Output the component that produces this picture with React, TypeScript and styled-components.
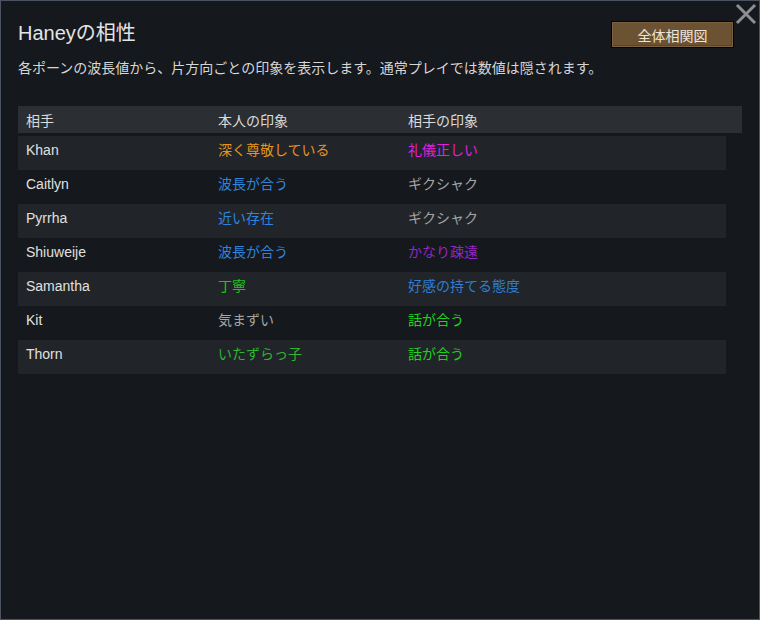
import React from "react";
import styled, { createGlobalStyle } from "styled-components";

const GlobalStyle = createGlobalStyle`
  html, body {
    margin: 0;
    padding: 0;
    background: #15181d;
  }
  body {
    font-family: "Liberation Sans", "Noto Sans CJK JP", sans-serif;
  }
`;

const Window = styled.div`
  position: relative;
  box-sizing: border-box;
  width: 760px;
  height: 620px;
  background: #15181d;
  border: 1px solid #4b5361;
  padding: 17px 17px 0 17px;
  color: #e2e2e2;
`;

const Header = styled.div`
  display: flex;
  justify-content: space-between;
  align-items: flex-start;
`;

const Title = styled.h1`
  margin: 2px 0 0 0;
  font-size: 20px;
  font-weight: normal;
  line-height: 26px;
  color: #e4e4e4;
`;

const MapButton = styled.button`
  box-sizing: border-box;
  width: 123px;
  height: 27px;
  margin: 3px 8px 0 0;
  background: #6b5232;
  border: 1px solid #050505;
  box-shadow: inset 0 0 0 1px #7d6240, inset -2px -2px 0 #5a4429;
  color: #ece6dc;
  font-family: "Liberation Sans", "Noto Sans CJK JP", sans-serif;
  font-size: 14px;
  cursor: pointer;
  padding: 0;
`;

const CloseButton = styled.button`
  position: absolute;
  top: 2px;
  right: 2px;
  width: 22px;
  height: 22px;
  padding: 0;
  border: none;
  background: transparent;
  cursor: pointer;
`;

const Subtitle = styled.p`
  margin: 11px 0 0 0;
  font-size: 14px;
  line-height: 18px;
  color: #d6d6d6;
`;

const Table = styled.div`
  margin-top: 29px;
  display: flex;
  flex-direction: column;
`;

const HeadRow = styled.div`
  display: grid;
  grid-template-columns: 192px 190px 1fr;
  height: 27px;
  align-items: center;
  background: #2b2e33;
  margin-bottom: 3px;
  font-size: 14px;
  color: #dcdcdc;
`;

const Row = styled.div<{ $shaded: boolean }>`
  display: grid;
  grid-template-columns: 192px 190px 1fr;
  width: 708px;
  height: 34px;
  box-sizing: border-box;
  padding-top: 6px;
  background: ${(p) => (p.$shaded ? "#212429" : "transparent")};
  font-size: 14px;
  line-height: 17px;
`;

const Cell = styled.div<{ $color?: string }>`
  padding-left: 8px;
  color: ${(p) => p.$color || "#e0e0e0"};
`;

const C = {
  orange: "#e4951c",
  blue: "#2e86dc",
  softBlue: "#2f7fd0",
  magenta: "#dd22dd",
  gray: "#a4a4a4",
  purple: "#9426c4",
  green: "#1cc41c",
  brightGreen: "#1fd01f",
  mossGreen: "#2fb52f",
};

type Relation = {
  name: string;
  mine: string;
  mineColor: string;
  theirs: string;
  theirsColor: string;
};

const relations: Relation[] = [
  { name: "Khan", mine: "深く尊敬している", mineColor: C.orange, theirs: "礼儀正しい", theirsColor: C.magenta },
  { name: "Caitlyn", mine: "波長が合う", mineColor: C.blue, theirs: "ギクシャク", theirsColor: C.gray },
  { name: "Pyrrha", mine: "近い存在", mineColor: C.blue, theirs: "ギクシャク", theirsColor: C.gray },
  { name: "Shiuweije", mine: "波長が合う", mineColor: C.blue, theirs: "かなり疎遠", theirsColor: C.purple },
  { name: "Samantha", mine: "丁寧", mineColor: C.green, theirs: "好感の持てる態度", theirsColor: C.softBlue },
  { name: "Kit", mine: "気まずい", mineColor: C.gray, theirs: "話が合う", theirsColor: C.brightGreen },
  { name: "Thorn", mine: "いたずらっ子", mineColor: C.mossGreen, theirs: "話が合う", theirsColor: C.brightGreen },
];

const App: React.FC = () => {
  return (
    <>
      <GlobalStyle />
      <Window>
        <CloseButton aria-label="閉じる">
          <svg width="22" height="22" viewBox="0 0 22 22">
            <path d="M3 3 L19 19 M19 3 L3 19" stroke="#8b8e93" strokeWidth="3" strokeLinecap="square" />
          </svg>
        </CloseButton>
        <Header>
          <Title>Haneyの相性</Title>
          <MapButton>全体相関図</MapButton>
        </Header>
        <Subtitle>
          各ポーンの波長値から、片方向ごとの印象を表示します。通常プレイでは数値は隠されます。
        </Subtitle>
        <Table>
          <HeadRow>
            <Cell $color="#dcdcdc">相手</Cell>
            <Cell $color="#dcdcdc">本人の印象</Cell>
            <Cell $color="#dcdcdc">相手の印象</Cell>
          </HeadRow>
          {relations.map((r, i) => (
            <Row key={r.name} $shaded={i % 2 === 0}>
              <Cell>{r.name}</Cell>
              <Cell $color={r.mineColor}>{r.mine}</Cell>
              <Cell $color={r.theirsColor}>{r.theirs}</Cell>
            </Row>
          ))}
        </Table>
      </Window>
    </>
  );
};

export default App;
